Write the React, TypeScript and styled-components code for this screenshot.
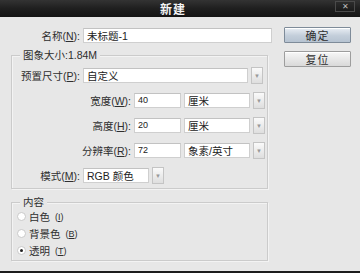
import React from 'react';
import styled, { createGlobalStyle, css } from 'styled-components';

const GlobalStyle = createGlobalStyle`
  html, body {
    margin: 0;
    padding: 0;
    background: #e7e7e7;
  }
`;

const Dialog = styled.div`
  width: 360px;
  height: 273px;
  display: flex;
  flex-direction: column;
  background: #e7e7e7;
  font-family: 'Liberation Sans', 'Noto Sans CJK SC', sans-serif;
  font-size: 10.5px;
  color: #2e2e2e;
  overflow: hidden;
`;

const TitleBar = styled.div`
  height: 17px;
  flex: none;
  display: flex;
  align-items: center;
  background: linear-gradient(#333 0%, #1f1f1f 50%, #141414 100%);
  padding: 0 5px 0 11px;
`;

const Title = styled.div`
  flex: 1;
  text-align: center;
  color: #f4f4f4;
  font-weight: bold;
  font-size: 12px;
  letter-spacing: 1px;
`;

const CloseButton = styled.div`
  width: 18px;
  height: 9px;
  margin-top: -4px;
  display: flex;
  align-items: center;
  justify-content: center;
  border: 1px solid #4a4a4a;
  background: linear-gradient(#2c2c2c, #1a1a1a);
  color: #bdbdbd;
  font-size: 8px;
  line-height: 1;
`;

const Body = styled.div`
  flex: 1;
  display: flex;
  gap: 12px;
`;

const Main = styled.div`
  width: 272px;
  display: flex;
  flex-direction: column;
  padding-top: 10px;
`;

const Side = styled.div`
  display: flex;
  flex-direction: column;
  gap: 8px;
  padding-top: 10px;
`;

const Button = styled.div<{ $primary?: boolean }>`
  width: 65px;
  height: 14px;
  display: flex;
  align-items: center;
  justify-content: center;
  border: 1px solid #9d9d9d;
  border-radius: 1px;
  background: linear-gradient(#f7f7f7, #d9d9d9);
  box-shadow: inset 0 1px 0 #fff;
  letter-spacing: 1px;
  font-size: 11px;
  ${(p) =>
    p.$primary &&
    css`
      border-color: #7e8b99;
      background: linear-gradient(#e9eef4, #c3ceda 55%, #b6c3d1);
    `}
`;

const Row = styled.div`
  display: flex;
  align-items: center;
  gap: 3px;
  height: 17px;
`;

const Label = styled.div<{ $width: number }>`
  width: ${(p) => p.$width}px;
  flex: none;
  text-align: right;
  white-space: nowrap;
`;

const Key = styled.span`
  text-decoration: underline;
`;

const Input = styled.div<{ $width: number }>`
  width: ${(p) => p.$width}px;
  height: 15px;
  flex: none;
  display: flex;
  align-items: center;
  padding-left: 3px;
  box-sizing: border-box;
  background: #fff;
  border: 1px solid #cfcfcf;
  border-top-color: #c2c2c2;
  white-space: nowrap;
  color: #222;
`;

const NumberInput = styled(Input)`
  font-size: 9px;
  align-items: flex-start;
  padding-top: 1px;
`;

const SelectBox = styled.div`
  display: flex;
  align-items: center;
  gap: 3px;
`;

const DropButton = styled.div`
  width: 10px;
  height: 15px;
  display: flex;
  align-items: center;
  justify-content: center;
  border: 1px solid #c4c4c4;
  background: linear-gradient(#fafafa, #dedede);
  color: #999;
  font-size: 6px;
`;

const Group = styled.section<{ $gap: number }>`
  margin: ${(p) => p.$gap}px 0 0 11px;
  width: 255px;
  display: flex;
  flex-direction: column;
  border: 1px solid #cbcbcb;
  box-shadow: inset 1px 1px 0 #f3f3f3, 1px 1px 0 #f3f3f3;
`;

/* caption straddles the top border, like a fieldset legend */
const GroupTitle = styled.div`
  align-self: flex-start;
  margin: -7px 0 0 8px;
  padding: 0 3px;
  line-height: 12px;
  background: #e7e7e7;
`;

const GroupBody = styled.div<{ $pad: string; $gap: number }>`
  display: flex;
  flex-direction: column;
  gap: ${(p) => p.$gap}px;
  padding: ${(p) => p.$pad};
`;

const RadioRow = styled.label`
  display: flex;
  align-items: center;
  gap: 3px;
  height: 17px;
`;

const RadioDot = styled.span<{ $checked?: boolean }>`
  width: 7px;
  height: 7px;
  border-radius: 50%;
  border: 1px solid #c9c9c9;
  background: #fff;
  display: flex;
  align-items: center;
  justify-content: center;
  &::after {
    content: '';
    width: 3px;
    height: 3px;
    border-radius: 50%;
    background: ${(p) => (p.$checked ? '#222' : 'transparent')};
  }
`;

const Hint = styled.span`
  font-size: 9px;
  margin-left: 2px;
`;

const BottomEdge = styled.div`
  height: 2px;
  flex: none;
  background: #1c1c1c;
`;

const Select = ({ width, value }: { width: number; value: string }) => (
  <SelectBox>
    <Input $width={width}>{value}</Input>
    <DropButton>▼</DropButton>
  </SelectBox>
);

const sizeRows = [
  { name: '宽度', key: 'W', value: '40', unit: '厘米' },
  { name: '高度', key: 'H', value: '20', unit: '厘米' },
  { name: '分辨率', key: 'R', value: '72', unit: '象素/英寸' },
];

const contents = [
  { name: '白色', key: 'I' },
  { name: '背景色', key: 'B' },
  { name: '透明', key: 'T', checked: true },
];

const App = () => {
  return (
    <>
      <GlobalStyle />
      <Dialog>
        <TitleBar>
          <Title>新建</Title>
          <CloseButton>✕</CloseButton>
        </TitleBar>
        <Body>
          <Main>
            <Row>
              <Label $width={80}>
                名称(<Key>N</Key>):
              </Label>
              <Input $width={189}>未标题-1</Input>
            </Row>

            <Group $gap={11}>
              <GroupTitle>图象大小:1.84M</GroupTitle>
              <GroupBody $pad="6px 0 4px 0" $gap={8}>
                <Row>
                  <Label $width={68}>
                    预置尺寸(<Key>P</Key>):
                  </Label>
                  <Select width={165} value="自定义" />
                </Row>
                {sizeRows.map((r) => (
                  <Row key={r.key}>
                    <Label $width={119}>
                      {r.name}(<Key>{r.key}</Key>):
                    </Label>
                    <NumberInput $width={47}>{r.value}</NumberInput>
                    <Select width={66} value={r.unit} />
                  </Row>
                ))}
                <Row>
                  <Label $width={68}>
                    模式(<Key>M</Key>):
                  </Label>
                  <Select width={66} value="RGB 颜色" />
                </Row>
              </GroupBody>
            </Group>

            <Group $gap={13}>
              <GroupTitle>内容</GroupTitle>
              <GroupBody $pad="0 0 1px 5px" $gap={0}>
                {contents.map((c) => (
                  <RadioRow key={c.key}>
                    <RadioDot $checked={c.checked} />
                    {c.name}
                    <Hint>
                      (<Key>{c.key}</Key>)
                    </Hint>
                  </RadioRow>
                ))}
              </GroupBody>
            </Group>
          </Main>
          <Side>
            <Button $primary>确定</Button>
            <Button>复位</Button>
          </Side>
        </Body>
        <BottomEdge />
      </Dialog>
    </>
  );
};

export default App;
